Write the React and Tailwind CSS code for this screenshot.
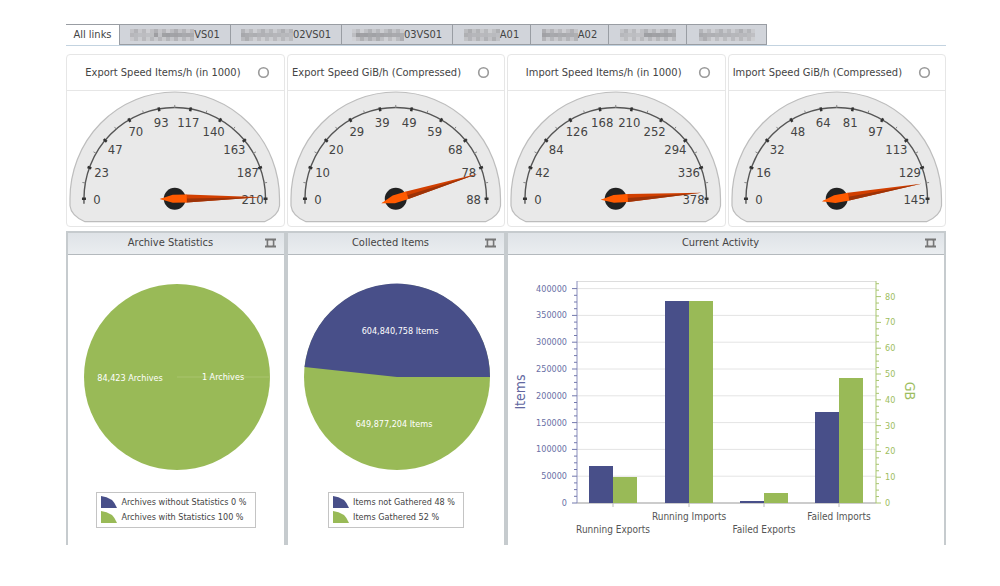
import React, { useState } from 'react'

const BLUE = '#484f89';
const GREEN = '#99ba57';

const tabs = [
    { id: 'all', blur: 0, text: 'All links', width: 'w-[54px]' },
    { id: 'a', blur: 64, text: 'VS01', width: 'w-[111px]' },
    { id: 'b', blur: 52, text: '02VS01', width: 'w-[111px]' },
    { id: 'c', blur: 52, text: '03VS01', width: 'w-[111px]' },
    { id: 'd', blur: 36, text: 'A01', width: 'w-[78px]' },
    { id: 'e', blur: 36, text: 'A02', width: 'w-[78px]' },
    { id: 'f', blur: 56, text: '', width: 'w-[78px]' },
    { id: 'g', blur: 56, text: '', width: 'w-[80px]' },
];

const gauges = [
    { title: 'Export Speed Items/h (in 1000)', labels: [0, 23, 47, 70, 93, 117, 140, 163, 187, 210], angle: 1 },
    { title: 'Export Speed GiB/h (Compressed)', labels: [0, 10, 20, 29, 39, 49, 59, 68, 78, 88], angle: 17 },
    { title: 'Import Speed Items/h (in 1000)', labels: [0, 42, 84, 126, 168, 210, 252, 294, 336, 378], angle: 4 },
    { title: 'Import Speed GiB/h (Compressed)', labels: [0, 16, 32, 48, 64, 81, 97, 113, 129, 145], angle: 10 },
];

const activity = [
    { name: 'Running Exports', x: 105, blue: 37, green: 26, labelY: 278 },
    { name: 'Running Imports', x: 181, blue: 202, green: 202, labelY: 265 },
    { name: 'Failed Exports', x: 256, blue: 2, green: 10, labelY: 278 },
    { name: 'Failed Imports', x: 331, blue: 91, green: 125, labelY: 265 },
];

// x/y on a circle, 0deg points right and 90deg points up
const polar = (cx, cy, r, deg) => {
    const a = (deg * Math.PI) / 180;
    return [cx + r * Math.cos(a), cy - r * Math.sin(a)];
};

// grey blocks over the private part of a server name
const Mosaic = ({ width, seed }) => {
    const cells = [];
    for (let x = 0; x < width; x += 4) {
        for (let y = 0; y < 12; y += 4) {
            const n = (x * 7 + y * 13 + seed * 29 + ((x * y) % 11) * 5) % 48;
            const base = y === 4 ? 140 : 160;
            cells.push(<rect key={`${x}-${y}`} x={x} y={y} width="4" height="4" fill={`rgb(${base + n},${base + n},${base + 3 + n})`} />);
        }
    }
    return (
        <svg width={width} height="12" aria-hidden="true" opacity="0.75">
            {cells}
        </svg>
    );
};

const Gauge = ({ title, labels, angle }) => {
    const cx = 108;
    const cy = 108;
    const ticks = Array.from({ length: 19 }, (_, i) => 180 - i * 10);

    return (
        <section className="border border-[#e6e6e6] rounded-sm bg-white">
            <header className="h-9 flex items-center justify-end gap-4 pr-3.5 border-b border-[#e6e6e6]">
                <h2 className="text-[11px] leading-4 text-[#444] whitespace-nowrap">{title}</h2>
                <button type="button" aria-label={`Refresh ${title}`} className="flex">
                    <svg width="13" height="13" viewBox="0 0 13 13">
                        <circle cx="6.5" cy="6.5" r="4.8" fill="#fff" stroke="#999" strokeWidth="1.6" />
                    </svg>
                </button>
            </header>
            <svg viewBox="0 0 217 135" className="block w-full">
                <path
                    d="M3 108 A105 107 0 0 1 213 108 V115 Q212 125 198 131 H18 Q4 125 3 115 Z"
                    fill="#e9e9e9" stroke="#bdbdbd" strokeWidth="1.2"
                />
                <path d="M17 113 V108 A91 91.5 0 0 1 199 108 V113" fill="none" stroke="#555" strokeWidth="1.4" />
                {ticks.map((deg, i) => {
                    const major = i % 2 === 0;
                    const [x1, y1] = polar(cx, cy, major ? 89 : 91, deg);
                    const [x2, y2] = polar(cx, cy, major ? 93 : 94, deg);
                    return (
                        <line key={deg} x1={x1} y1={y1} x2={x2} y2={y2} stroke={major ? '#333' : '#888'} strokeWidth={major ? 2.5 : 1} />
                    );
                })}
                {labels.map((label, i) => {
                    const [x, y] = polar(cx, cy, 78, 180 - i * 20);
                    return (
                        <text key={label} x={x} y={y + 5} textAnchor="middle" fontSize="13" fill="#444">
                            {label}
                        </text>
                    );
                })}
                <circle cx={cx} cy={cy} r="11" fill="#222" />
                <g transform={`rotate(${-angle} ${cx} ${cy})`}>
                    <path d={`M${cx - 15} ${cy} L${cx + 12} ${cy - 4} L${cx + 86} ${cy} L${cx + 12} ${cy + 4} Z`} fill="#d23f00" />
                    <path d={`M${cx + 12} ${cy} L${cx + 12} ${cy + 4} L${cx + 86} ${cy} Z`} fill="#9c3308" />
                    <path d={`M${cx - 15} ${cy} L${cx - 2} ${cy - 4} H${cx + 12} V${cy + 4} H${cx - 2} Z`} fill="#ff5a00" />
                </g>
            </svg>
        </section>
    );
};

const Panel = ({ title, className, children }) => (
    <section className={`border-x-2 border-t-2 border-[#c6cbce] bg-white ${className || ''}`}>
        <header className="h-[22px] flex items-center pl-2 pr-2 border-b border-[#b4b9bd] bg-linear-to-b from-[#dfe3e7] to-[#eaedf0]">
            <h2 className="flex-1 text-center text-[11px] leading-4 text-[#444]">{title}</h2>
            <button type="button" aria-label={`Maximize ${title}`} className="flex">
                <svg width="11" height="10" viewBox="0 0 11 10">
                    <path d="M2.5 0.5 V9.5 M8.5 0.5 V9.5 M0 1.5 H11 M0 8.5 H11" stroke="#777" strokeWidth="1.8" />
                    <rect x="3.5" y="3" width="4" height="4" fill="#e4e4e4" />
                </svg>
            </button>
        </header>
        {children}
    </section>
);

const Legend = ({ items }) => (
    <ul className="w-fit mx-auto border border-[#c4c4c4] bg-white pl-1 pr-2 py-0.5">
        {items.map((item) => (
            <li key={item.text} className="flex items-center gap-1 h-[15px]">
                <svg width="16" height="12" viewBox="0 0 16 12">
                    <path d="M0 0 Q12 1 16 12 H0 Z" fill={item.color} />
                </svg>
                <span className="text-[9px] leading-3 text-[#444] whitespace-nowrap">{item.text}</span>
            </li>
        ))}
    </ul>
);

const ActivityChart = () => {
    const base = 248;
    const itemTicks = [0, 50000, 100000, 150000, 200000, 250000, 300000, 350000, 400000];
    const gbTicks = [0, 10, 20, 30, 40, 50, 60, 70, 80];

    return (
        <svg viewBox="0 0 436 290" className="block w-full">
            {/* Grid */}
            <line x1="69" y1="26.5" x2="368" y2="26.5" stroke="#ddd" />
            {itemTicks.map((t, i) => (
                <line key={t} x1="69" y1={base - i * 26.8} x2="368" y2={base - i * 26.8} stroke={i === 0 ? '#999' : '#e4e4e4'} />
            ))}

            {/* Items axis */}
            <line x1="69" y1="26" x2="69" y2={base} stroke="#8b8fbd" />
            {Array.from({ length: 33 }, (_, i) => (
                <line key={i} x1={i % 4 ? 66 : 64} y1={base - i * 6.7} x2="69" y2={base - i * 6.7} stroke="#7378ad" />
            ))}
            {itemTicks.map((t, i) => (
                <text key={t} x="59" y={base - i * 26.8 + 3} textAnchor="end" fontSize="9" fill="#6a6fa6">{t}</text>
            ))}
            <text transform="translate(17 137) rotate(-90)" textAnchor="middle" fontSize="14" fill="#6267a0">Items</text>

            {/* GB axis */}
            <line x1="368" y1="26" x2="368" y2={base} stroke="#a9c670" />
            {Array.from({ length: 35 }, (_, i) => (
                <line key={i} x1="368" y1={base - i * 6.45} x2={i % 4 ? 371 : 373} y2={base - i * 6.45} stroke="#a9c670" />
            ))}
            {gbTicks.map((t, i) => (
                <text key={t} x="377" y={base - i * 25.8 + 3} fontSize="9" fill="#9dbd60">{t}</text>
            ))}
            <text transform="translate(397 136) rotate(90)" textAnchor="middle" fontSize="14" fill="#9dbd60">GB</text>

            {/* Bars */}
            {activity.map((a) => (
                <g key={a.name}>
                    <rect x={a.x - 24} y={base - a.blue} width="24" height={a.blue} fill={BLUE} />
                    <rect x={a.x} y={base - a.green} width="24" height={a.green} fill={GREEN} />
                    <line x1={a.x} y1={base} x2={a.x} y2={base + 4} stroke="#bbb" />
                    <text x={a.x} y={a.labelY} textAnchor="middle" fontSize="10" fill="#555">{a.name}</text>
                </g>
            ))}
        </svg>
    );
};

const App = () => {
    const [active, setActive] = useState('all');

    return (
        <main className="bg-white pl-[66px] pr-[54px] pt-6 pb-10 font-['DejaVu_Sans_Condensed','DejaVu_Sans',sans-serif]">
            {/* Tabs */}
            <nav className="flex border-b border-[#c3d3e0]">
                {tabs.map((tab, index) => (
                    <button
                        key={tab.id}
                        type="button"
                        onClick={() => setActive(tab.id)}
                        className={`${tab.width} h-[21px] flex items-center justify-center text-[11px] leading-4 text-[#444] border-t border-r border-[#999da3] whitespace-nowrap ${
                            active === tab.id ? 'bg-white' : 'bg-[#d1d4da] border-b'
                        }`}
                    >
                        {tab.blur > 0 && <Mosaic width={tab.blur} seed={index} />}
                        {tab.text}
                    </button>
                ))}
            </nav>

            {/* Gauges */}
            <div className="grid grid-cols-4 gap-0.5 mt-2">
                {gauges.map((g) => (
                    <Gauge key={g.title} {...g} />
                ))}
            </div>

            {/* Charts */}
            <div className="grid grid-cols-4 mt-1">
                <Panel title="Archive Statistics">
                    <svg viewBox="0 0 216 237" className="block w-full">
                        <circle cx="109" cy="122" r="93" fill={GREEN} />
                        <line x1="109" y1="122" x2="202" y2="122" stroke="#a9c46f" />
                        <text x="62" y="126" textAnchor="middle" fontSize="9" fill="#fff">84,423 Archives</text>
                        <text x="155" y="125" textAnchor="middle" fontSize="9" fill="#fff">1 Archives</text>
                    </svg>
                    <Legend
                        items={[
                            { color: BLUE, text: 'Archives without Statistics 0 %' },
                            { color: GREEN, text: 'Archives with Statistics 100 %' },
                        ]}
                    />
                </Panel>
                <Panel title="Collected Items">
                    <svg viewBox="0 0 216 237" className="block w-full">
                        <circle cx="109" cy="122" r="93" fill={GREEN} />
                        <path d="M109 122 H202 A93 93 0 0 0 16.5 112 Z" fill={BLUE} />
                        <text x="112" y="79" textAnchor="middle" fontSize="9" fill="#fff">604,840,758 Items</text>
                        <text x="106" y="172" textAnchor="middle" fontSize="9" fill="#fff">649,877,204 Items</text>
                    </svg>
                    <Legend
                        items={[
                            { color: BLUE, text: 'Items not Gathered 48 %' },
                            { color: GREEN, text: 'Items Gathered 52 %' },
                        ]}
                    />
                </Panel>
                <Panel title="Current Activity" className="col-span-2">
                    <ActivityChart />
                </Panel>
            </div>
        </main>
    );
};

export default App
